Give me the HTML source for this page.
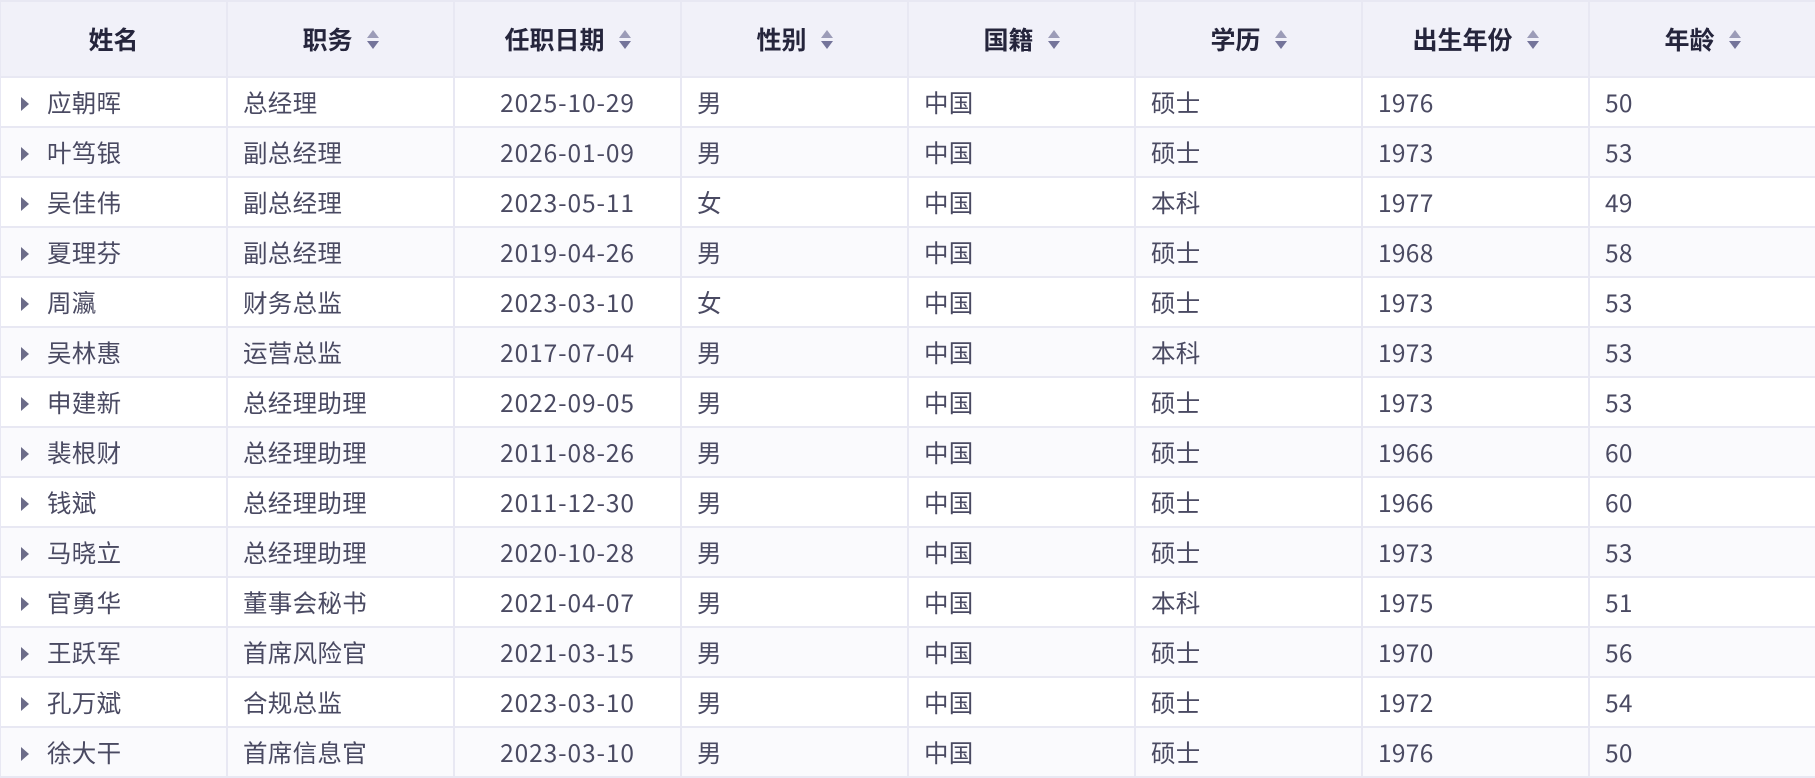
<!DOCTYPE html>
<html><head><meta charset="utf-8">
<style>
html,body{margin:0;padding:0;background:#fff;}
body{width:1815px;height:774px;overflow:hidden;font-family:"Noto Sans CJK SC","Liberation Sans",sans-serif;}
table{border-collapse:collapse;table-layout:fixed;width:1817px;margin-left:-1px;}
col{width:227px;}
th,td{border:2px solid #e8e8f3;padding:0;white-space:nowrap;}
th{height:74px;background:#f1f1f9;color:#25253c;font-weight:bold;font-size:25px;text-align:center;}
td{height:48px;color:#4a4a62;font-size:24.5px;padding-left:15px;letter-spacing:0.3px;}
tr:nth-child(odd) td{background:#fafafd;}
td.c{text-align:center;padding-left:0;letter-spacing:0.9px;}
td.n{padding-left:20px;}
.ar{display:inline-block;width:0;height:0;border-left:8px solid #6b6b88;border-top:7px solid transparent;border-bottom:7px solid transparent;margin-right:18px;vertical-align:1px;}
.s{display:inline-block;vertical-align:middle;margin-left:14px;width:12px;height:22px;position:relative;top:-2px;}
.s:before{content:"";position:absolute;left:0;top:1px;border-bottom:8px solid #9c9cb8;border-left:6px solid transparent;border-right:6px solid transparent;}
.s:after{content:"";position:absolute;left:0;top:12px;border-top:8px solid #74749a;border-left:6px solid transparent;border-right:6px solid transparent;}
</style></head><body>
<table>
<colgroup><col><col><col><col><col><col><col><col></colgroup>
<tr><th>姓名</th><th>职务<span class="s"></span></th><th>任职日期<span class="s"></span></th><th>性别<span class="s"></span></th><th>国籍<span class="s"></span></th><th>学历<span class="s"></span></th><th>出生年份<span class="s"></span></th><th>年龄<span class="s"></span></th></tr>
<tr><td class="n"><span class="ar"></span>应朝晖</td><td>总经理</td><td class="c">2025-10-29</td><td>男</td><td>中国</td><td>硕士</td><td>1976</td><td>50</td></tr>
<tr><td class="n"><span class="ar"></span>叶笃银</td><td>副总经理</td><td class="c">2026-01-09</td><td>男</td><td>中国</td><td>硕士</td><td>1973</td><td>53</td></tr>
<tr><td class="n"><span class="ar"></span>吴佳伟</td><td>副总经理</td><td class="c">2023-05-11</td><td>女</td><td>中国</td><td>本科</td><td>1977</td><td>49</td></tr>
<tr><td class="n"><span class="ar"></span>夏理芬</td><td>副总经理</td><td class="c">2019-04-26</td><td>男</td><td>中国</td><td>硕士</td><td>1968</td><td>58</td></tr>
<tr><td class="n"><span class="ar"></span>周瀛</td><td>财务总监</td><td class="c">2023-03-10</td><td>女</td><td>中国</td><td>硕士</td><td>1973</td><td>53</td></tr>
<tr><td class="n"><span class="ar"></span>吴林惠</td><td>运营总监</td><td class="c">2017-07-04</td><td>男</td><td>中国</td><td>本科</td><td>1973</td><td>53</td></tr>
<tr><td class="n"><span class="ar"></span>申建新</td><td>总经理助理</td><td class="c">2022-09-05</td><td>男</td><td>中国</td><td>硕士</td><td>1973</td><td>53</td></tr>
<tr><td class="n"><span class="ar"></span>裴根财</td><td>总经理助理</td><td class="c">2011-08-26</td><td>男</td><td>中国</td><td>硕士</td><td>1966</td><td>60</td></tr>
<tr><td class="n"><span class="ar"></span>钱斌</td><td>总经理助理</td><td class="c">2011-12-30</td><td>男</td><td>中国</td><td>硕士</td><td>1966</td><td>60</td></tr>
<tr><td class="n"><span class="ar"></span>马晓立</td><td>总经理助理</td><td class="c">2020-10-28</td><td>男</td><td>中国</td><td>硕士</td><td>1973</td><td>53</td></tr>
<tr><td class="n"><span class="ar"></span>官勇华</td><td>董事会秘书</td><td class="c">2021-04-07</td><td>男</td><td>中国</td><td>本科</td><td>1975</td><td>51</td></tr>
<tr><td class="n"><span class="ar"></span>王跃军</td><td>首席风险官</td><td class="c">2021-03-15</td><td>男</td><td>中国</td><td>硕士</td><td>1970</td><td>56</td></tr>
<tr><td class="n"><span class="ar"></span>孔万斌</td><td>合规总监</td><td class="c">2023-03-10</td><td>男</td><td>中国</td><td>硕士</td><td>1972</td><td>54</td></tr>
<tr><td class="n"><span class="ar"></span>徐大干</td><td>首席信息官</td><td class="c">2023-03-10</td><td>男</td><td>中国</td><td>硕士</td><td>1976</td><td>50</td></tr>
</table>
</body></html>
